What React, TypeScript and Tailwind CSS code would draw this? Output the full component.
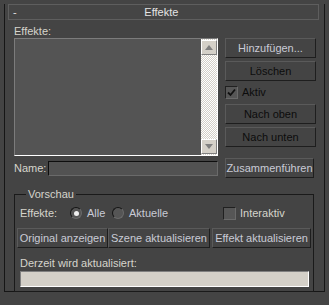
import React from 'react';

const font = "font-['Liberation_Sans',Arial,sans-serif]";

function Btn({ label, w, disabled, className = '' }: { label: string; w: string; disabled?: boolean; className?: string }) {
  return (
    <div
      className={`${w} h-[20px] flex items-center justify-center border border-t-[#5a5a5a] border-l-[#5a5a5a] border-r-[#1e1e1e] border-b-[#1e1e1e] bg-[#444444] leading-none ${
        disabled ? 'text-[#0c0c0c]' : 'text-[#c9cbd6]'
      } ${className}`}
    >
      {label}
    </div>
  );
}

function Check({ checked }: { checked?: boolean }) {
  return (
    <div className="w-[13px] h-[13px] border border-t-[#202020] border-l-[#202020] border-r-[#6a6a6a] border-b-[#6a6a6a] bg-[#565656] flex items-center justify-center">
      {checked && (
        <svg width="9" height="9" viewBox="0 0 9 9">
          <path d="M1 4.5 L3.5 7 L8 1.5" stroke="#111" strokeWidth="1.8" fill="none" />
        </svg>
      )}
    </div>
  );
}

function Radio({ checked }: { checked?: boolean }) {
  return (
    <div className="w-[12px] h-[12px] rounded-full border border-t-[#151515] border-l-[#151515] border-r-[#6a6a6a] border-b-[#6a6a6a] bg-[#555555] flex items-center justify-center">
      {checked && <div className="w-[5px] h-[5px] rounded-full bg-[#f0f0f0]" />}
    </div>
  );
}

function ScrollBtn({ up }: { up?: boolean }) {
  return (
    <div className="w-[16px] h-[15px] bg-[#d4d0c8] border border-t-[#ffffff] border-l-[#ffffff] border-r-[#808080] border-b-[#808080] flex items-center justify-center">
      <svg width="8" height="5" viewBox="0 0 8 5">
        {up ? <path d="M0 5 L4 0 L8 5 Z" fill="#808080" /> : <path d="M0 0 L4 5 L8 0 Z" fill="#808080" />}
      </svg>
    </div>
  );
}

export default function App() {
  return (
    <div className={`w-[329px] h-[305px] bg-[#444444] pt-[4px] pl-[4px] text-[11px] ${font} text-[#d6d4cc]`}>
      <div className="w-[321px] h-[288px] mt-[8px] border-l border-r border-b border-[#161616]">
        {/* title */}
        <div className="-mt-[8px] ml-[3px] w-[311px] h-[16px] border border-[#5e5e5e] bg-[#454545] flex items-center px-[4px] leading-none">
          <span className="text-[#e0e0e0]">-</span>
          <span className="flex-1 text-center text-[#e4e4e4] pr-[8px]">Effekte</span>
        </div>

        <div className="pl-[9px]">
          <div className="h-[18px] pt-[4px] leading-[14px]">Effekte:</div>

          <div className="flex">
            {/* list */}
            <div className="w-[204px] h-[118px] border border-t-[#7c7c7c] border-l-[#7c7c7c] border-r-white border-b-white bg-[#545454] flex justify-end">
              <div className="w-[16px] h-full flex flex-col justify-between pt-[1px] pb-[1px] bg-[repeating-conic-gradient(#d4d0c8_0_25%,#ffffff_0_50%)] bg-[length:2px_2px]">
                <ScrollBtn up />
                <ScrollBtn />
              </div>
            </div>

            {/* right column */}
            <div className="ml-[7px] w-[91px] flex flex-col">
              <Btn label="Hinzufügen..." w="w-[91px]" />
              <Btn label="Löschen" w="w-[91px]" disabled className="mt-[3px]" />
              <div className="h-[21px] flex items-center gap-[4px] mt-[1px]">
                <Check checked />
                <span className="text-[#0c0c0c]">Aktiv</span>
              </div>
              <Btn label="Nach oben" w="w-[91px]" disabled className="mt-[1px]" />
              <Btn label="Nach unten" w="w-[91px]" disabled className="mt-[3px]" />
            </div>
          </div>

          {/* name row */}
          <div className="flex items-end mt-[2px]">
            <div className="w-[204px] flex items-center h-[20px]">
              <span className="w-[34px]">Name:</span>
              <div className="w-[170px] h-[15px] border border-t-[#0e0e0e] border-l-[#0e0e0e] border-r-[#6a6a6a] border-b-[#6a6a6a] bg-[#525252]" />
            </div>
            <Btn label="Zusammenführen" w="w-[89px]" className="ml-[7px]" />
          </div>

          {/* Vorschau group */}
          <fieldset className="w-[300px] h-[105px] mt-[9px] border border-[#1a1a1a] pl-[5px]">
            <legend className="ml-[6px] px-[2px] leading-[14px]">Vorschau</legend>
            <div className="flex items-center h-[14px] mt-[5px]">
              <span className="w-[50px]">Effekte:</span>
              <Radio checked />
              <span className="ml-[5px] w-[25px] text-[#c9cbd6]">Alle</span>
              <Radio />
              <span className="ml-[5px] w-[94px] text-[#c9cbd6]">Aktuelle</span>
              <div className="flex items-center gap-[4px]">
                <Check />
                <span>Interaktiv</span>
              </div>
            </div>
            <div className="flex mt-[8px] -ml-[3px]">
              <Btn label="Original anzeigen" w="w-[91px]" />
              <Btn label="Szene aktualisieren" w="w-[102px]" />
              <Btn label="Effekt aktualisieren" w="w-[99px]" className="ml-[2px]" />
            </div>
            <div className="mt-[8px] leading-[14px]">Derzeit wird aktualisiert:</div>
            <div className="mt-[1px] w-[289px] h-[16px] bg-[#d4d0c8] border border-t-[#808080] border-l-[#808080] border-r-white border-b-white" />
          </fieldset>
        </div>
      </div>
    </div>
  );
}
